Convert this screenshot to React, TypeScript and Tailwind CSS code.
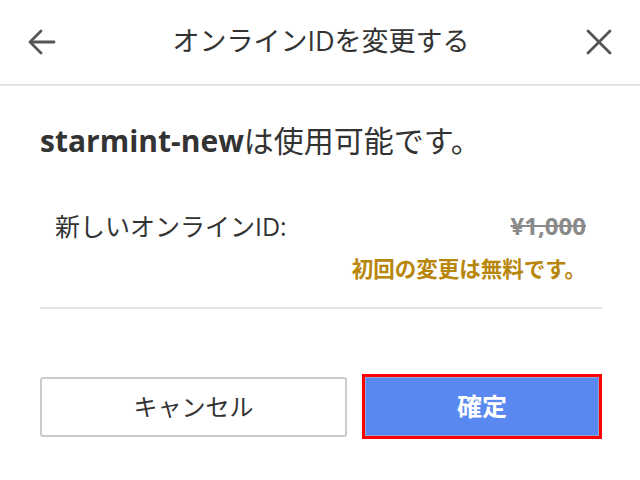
import React from 'react';

const font = { fontFamily: '"Open Sans", "Noto Sans CJK JP", sans-serif' };

function BackIcon() {
    return (
        <svg width="28" height="26" viewBox="0 0 28 26" fill="none" stroke="#555" strokeWidth="2.8" strokeLinecap="round" strokeLinejoin="round">
            <path d="M26 13H3" />
            <path d="M13 2L2 13l11 11" />
        </svg>
    );
}

function CloseIcon() {
    return (
        <svg width="26" height="26" viewBox="0 0 26 26" fill="none" stroke="#555" strokeWidth="2.8" strokeLinecap="round">
            <path d="M2 2l22 22" />
            <path d="M24 2L2 24" />
        </svg>
    );
}

export default function App() {
    return (
        <div className="w-[640px] h-[480px] bg-white text-[#333] overflow-hidden" style={font}>
            <header className="h-[86px] border-b-2 border-[#e4e4e4] flex items-center justify-between pl-[28px] pr-[28px]">
                <button className="w-[28px] h-[26px] flex items-center justify-center">
                    <BackIcon />
                </button>
                <h1 className="text-[27px] leading-[34px] text-[#333] -mt-[2px]">オンラインIDを変更する</h1>
                <button className="w-[26px] h-[26px] flex items-center justify-center">
                    <CloseIcon />
                </button>
            </header>

            <main className="pl-[40px] pr-[38px]">
                <p className="mt-[35px] text-[30px] leading-[40px] text-[#333]">
                    <span className="font-bold">starmint-new</span>は使用可能です。
                </p>

                <div className="mt-[49px] flex items-center justify-between pl-[15px] pr-[16px]">
                    <span className="text-[25px] leading-[32px] text-[#333]">新しいオンラインID:</span>
                    <span className="text-[24px] leading-[32px] font-bold text-[#8a8a8a] line-through">¥1,000</span>
                </div>
                <div className="mt-[13px] flex justify-end pr-[16px]">
                    <span className="text-[21.5px] leading-[28px] font-bold text-[#b8860b]">初回の変更は無料です。</span>
                </div>

                <div className="mt-[24px] border-t-2 border-[#e4e4e4]" />

                <div className="mt-[65px] flex items-center gap-[15px]">
                    <button className="w-[308px] h-[60px] border-2 border-[#cbcbcb] rounded-[3px] bg-white text-[24px] text-[#333]">
                        キャンセル
                    </button>
                    <div className="w-[241px] h-[65px] border-[3px] border-[#ff0000] flex">
                        <button className="flex-1 bg-[#5a88f1] border border-[#8aa4d8] text-white text-[25px] font-bold">
                            確定
                        </button>
                    </div>
                </div>
            </main>
        </div>
    );
}
